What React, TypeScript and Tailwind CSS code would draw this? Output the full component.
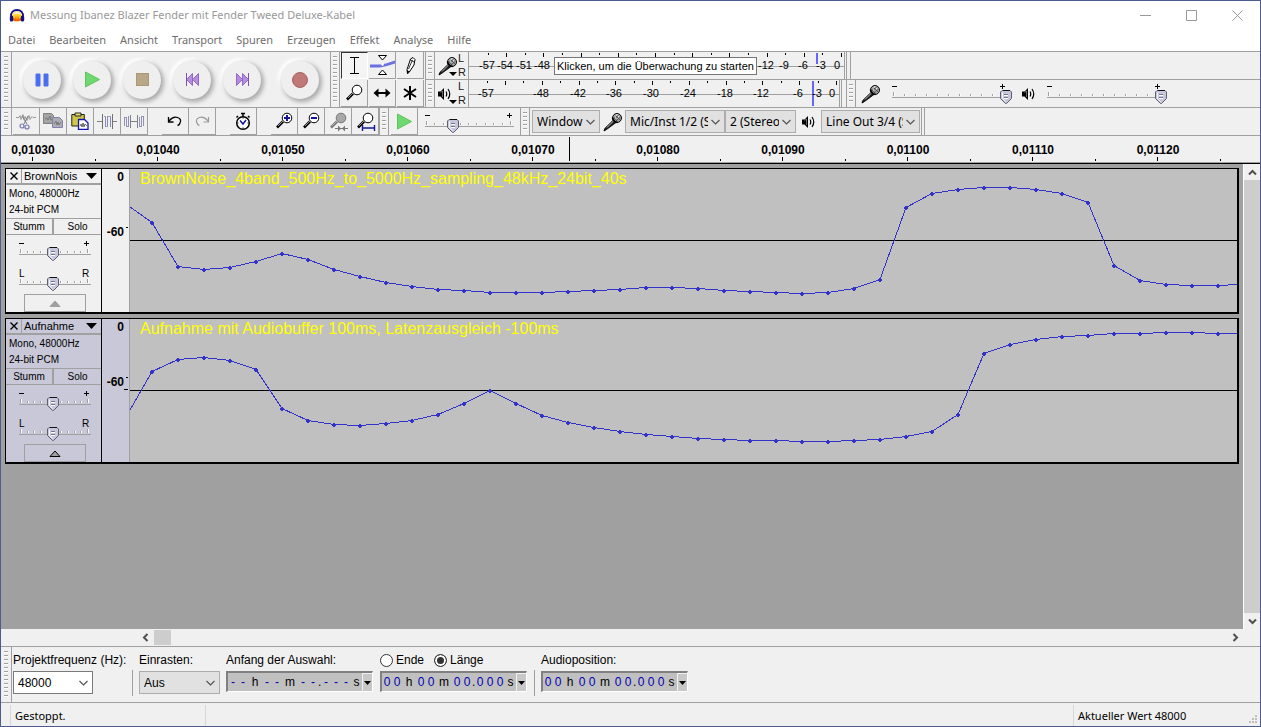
import { useState, type ReactNode } from 'react';
import clsx from 'clsx';

type Track = {
  name: string;
  label: string;
  selected: boolean;
  start: number;
  end: number;
  samples: number[];
};

const menus = ['Datei', 'Bearbeiten', 'Ansicht', 'Transport', 'Spuren', 'Erzeugen', 'Effekt', 'Analyse', 'Hilfe'];

const tracks: Track[] = [
  {
    name: 'BrownNois',
    label: 'BrownNoise_4band_500Hz_to_5000Hz_sampling_48kHz_24bit_40s',
    selected: false,
    start: 38,
    end: 115,
    samples: [
      53, 97, 100, 98, 92, 84, 90, 100, 107, 113, 117, 120, 121, 123, 123, 123, 122, 121, 120, 118, 118, 119, 121, 122,
      123, 124, 123, 119, 110, 38, 24, 20, 18, 18, 20, 24, 33, 96, 111, 115, 116, 116,
    ],
  },
  {
    name: 'Aufnahme',
    label: 'Aufnahme mit Audiobuffer 100ms, Latenzausgleich -100ms',
    selected: true,
    start: 91,
    end: 14,
    samples: [
      52, 40, 38, 41, 50, 89, 101, 105, 106, 104, 101, 95, 84, 71, 84, 96, 103, 108, 112, 115, 117, 119, 120, 121, 121,
      122, 122, 121, 120, 117, 112, 95, 34, 25, 20, 17, 16, 14, 14, 13, 13, 14,
    ],
  },
];

const timeLabels = [
  '0,01030', '0,01040', '0,01050', '0,01060', '0,01070', '0,01080', '0,01090', '0,01100', '0,01110', '0,01120',
];

/* ---------- small building blocks ---------- */

function Grip({ flush = false }: { flush?: boolean }) {
  return (
    <div className={clsx('flex shrink-0 justify-center border-r border-[#a0a0a0] py-1', flush ? 'w-[11px]' : 'w-[10px] border-l')}>
      <div className="w-1 bg-[repeating-linear-gradient(to_bottom,#a0a0a0_0_1px,#ffffff_1px_2px,#f0f0f0_2px_4px)]" />
    </div>
  );
}

function ToolButton({ label, active, children }: { label: string; active?: boolean; children: ReactNode }) {
  return (
    <button
      aria-label={label}
      className={clsx(
        'flex h-[27px] w-[27px] shrink-0 items-center justify-center border-r border-b',
        active ? 'border-t border-l border-t-[#333] border-l-[#333] border-r-white border-b-white bg-[#f4f4f4]' : 'border-[#a0a0a0]',
      )}
    >
      {children}
    </button>
  );
}

function RoundButton({ label, children }: { label: string; children: ReactNode }) {
  return (
    <button
      aria-label={label}
      className="flex h-[38px] w-[38px] shrink-0 items-center justify-center rounded-full bg-[#efefef] shadow-[2px_2px_4px_1px_#acacac,-2px_-2px_3px_1px_#ffffff]"
    >
      {children}
    </button>
  );
}

function Slider({
  label,
  width,
  value,
  left = '-',
  right = '+',
}: {
  label: string;
  width: number;
  value: number;
  left?: string;
  right?: string;
}) {
  const [pos, setPos] = useState(value);
  const ticks = Array.from({ length: 11 }, (_, i) => Math.round(1 + (i * (width - 5)) / 10));
  const x = Math.round(((width - 1) * pos) / 100);
  return (
    <div className="relative h-[22px] shrink-0" style={{ width }}>
      <svg width={width} height="22" className="block overflow-visible" shapeRendering="crispEdges">
        {left === '-' ? (
          <path d="M0 3.5h5" stroke="#000" />
        ) : (
          <text x="0" y="7" fontSize="10" className="font-['Liberation_Sans',sans-serif]">{left}</text>
        )}
        {right === '+' ? (
          <path d={`M${width - 7} 3.5h5M${width - 4.5} 1v5`} stroke="#000" />
        ) : (
          <text x={width - 9} y="7" fontSize="10" className="font-['Liberation_Sans',sans-serif]">{right}</text>
        )}
        {ticks.map((t, i) => {
          const edge = i === 0 || i === 10;
          return (
            <g key={t}>
              <rect x={t} y={edge ? 9 : 11} width="1" height={edge ? 4 : 2} fill="#a0a0a0" />
              <rect x={t + 1} y={edge ? 9 : 11} width="1" height={edge ? 4 : 2} fill="#fff" />
            </g>
          );
        })}
        <rect x="0" y="14" width={width} height="1" fill="#a0a0a0" />
        <g transform={`translate(${x - 6} 7)`}>
          <path d="M2 .5h8l1.500 1.500v6.500l-5 5h-1l-5-5V2z" fill="#c6c6dc" stroke="#5f5f6b" shapeRendering="auto" />
          <path d="M3 .5h6.500" stroke="#111" />
          <path d="M2.500 2.500v6l3 3" stroke="#f4f4ff" fill="none" shapeRendering="auto" />
          <path d="M4 4.500h4M4 7.500h4" stroke="#77778c" />
          <path d="M4 5.500h4M4 8.500h4" stroke="#fff" />
        </g>
      </svg>
      <input
        type="range"
        aria-label={label}
        value={pos}
        onChange={(e) => setPos(Number(e.target.value))}
        className="absolute inset-0 m-0 h-full w-full cursor-pointer opacity-0"
      />
    </div>
  );
}

function Dropdown({
  label,
  value,
  id,
  className,
}: {
  label?: string;
  value: string;
  id?: string;
  className: string;
}) {
  return (
    <div className={clsx('relative flex shrink-0 border', className)}>
      <select
        id={id}
        aria-label={label}
        className="h-full w-full appearance-none overflow-hidden bg-transparent pr-[16px] pl-[4px] text-black outline-none"
      >
        <option>{value}</option>
      </select>
      <svg width="9" height="6" viewBox="0 0 9 6" className="pointer-events-none absolute top-1/2 right-[4px] -mt-[3px]">
        <path d="M.5 1l4 4 4-4" fill="none" stroke="#505050" strokeWidth="1.100" />
      </svg>
    </div>
  );
}

/* ---------- icons ---------- */

function Logo() {
  return (
    <svg width="16" height="16" viewBox="0 0 16 16">
      <path d="M3.500 7q1-3.500 4.500-3.500T12.500 7v5.500q-4.500 2-9 0z" fill="#ffcf20" />
      <path d="M4 6.500Q5 4 8 4t4 2.500q-4-1-8 0z" fill="#fff8d8" />
      <path d="M4 10.500l1-1 1 2 1-4 1 5 1-5 1 4 1-2 1 1v2q-4 1.500-8 0z" fill="#f86000" />
      <path d="M2 9C1.500 4 4.500 2 8 2s6.500 2 6 7" fill="none" stroke="#10108c" strokeWidth="1.800" />
      <rect x=".8" y="7.500" width="3.400" height="6" rx="1.500" fill="#10108c" />
      <rect x="11.800" y="7.500" width="3.400" height="6" rx="1.500" fill="#10108c" />
    </svg>
  );
}

function MicIcon() {
  return (
    <svg width="20" height="20" viewBox="0 0 20 20">
      <path d="M10.500 8l2.500 2.500L3.500 17.500 1 19l.8-2.500z" fill="#222" stroke="#000" strokeWidth=".9" />
      <path d="M10.500 9L4 15.500" stroke="#d0d0d0" strokeWidth=".9" />
      <circle cx="14" cy="6" r="4.500" fill="#a8a8a8" stroke="#000" />
      <path d="M10.500 5l4 4.500M12 3l5 5M11 7.500l5-5M13 9l4.500-4" stroke="#333" strokeWidth=".7" />
      <path d="M12.500 3.500l2-1M15 4.500l1 .5M12 6h1" stroke="#fff" strokeWidth="1" />
      <path d="M9.500 5.500q1 4.500 5 5" stroke="#000" strokeWidth="1.600" fill="none" />
    </svg>
  );
}

function SpeakerIcon() {
  return (
    <svg width="14" height="14" viewBox="0 0 14 14">
      <path d="M0 4.500h2.500L6 1v12L2.500 9.500H0z" fill="#000" />
      <path d="M2.500 5.500L4.500 4v6" stroke="#888" strokeWidth=".8" fill="none" />
      <path d="M8 4.500q1.500 2.500 0 5M10 2q3.500 5 0 10" fill="none" stroke="#000" strokeWidth="1.200" />
    </svg>
  );
}

function Lens({ sign, gray, children }: { sign?: 'plus' | 'minus'; gray?: boolean; children?: ReactNode }) {
  const ink = gray ? '#777' : '#000';
  return (
    <svg width="21" height="21" viewBox="0 0 21 21">
      <path d="M9 10.500L3 16.500" stroke={ink} strokeWidth="2.600" />
      <path d="M9 10L4 15" stroke="#bbb" strokeWidth=".8" />
      <circle cx="13" cy="7" r="4.800" fill={gray ? '#a8a8a8' : '#fff'} stroke={ink} />
      {sign && <path d="M10 7h6" stroke="#1414a0" strokeWidth="2" />}
      {sign === 'plus' && <path d="M13 4v6" stroke="#1414a0" strokeWidth="2" />}
      {children}
    </svg>
  );
}

function PlayGlyph() {
  return (
    <svg width="17" height="17" viewBox="0 0 17 17">
      <path d="M1.500 1v15l14-7.500z" fill="#70d870" stroke="#5cc45c" />
    </svg>
  );
}

function SkipGlyph({ back }: { back?: boolean }) {
  return (
    <svg width="15" height="15" viewBox="0 0 15 15" className={back ? '-scale-x-100' : ''}>
      <path d="M1.500 1.500v12l6-6zM7.500 1.500v12l6-6z" fill="#b48ce0" stroke="#9468c4" />
      <path d="M13.500 1v13" stroke="#8050b0" />
    </svg>
  );
}

/* ---------- toolbars ---------- */

function TransportToolbar() {
  return (
    <div className="flex shrink-0">
      <Grip flush />
      <div className="flex items-center gap-[12px] pr-[11px] pl-[11px]">
        <RoundButton label="Pause">
          <svg width="14" height="14" viewBox="0 0 14 14">
            <path d="M1 1h4v12H1zM9 1h4v12H9z" fill="#4a6ef0" stroke="#4a6ef0" />
          </svg>
        </RoundButton>
        <RoundButton label="Wiedergabe"><PlayGlyph /></RoundButton>
        <RoundButton label="Stopp">
          <span className="h-[13px] w-[13px] border border-[#a89878] bg-[#b8a888]" />
        </RoundButton>
        <RoundButton label="Zum Anfang"><SkipGlyph back /></RoundButton>
        <RoundButton label="Zum Ende"><SkipGlyph /></RoundButton>
        <div className="pl-2">
          <RoundButton label="Aufnahme">
            <span className="h-4 w-4 rounded-full border border-[#a86464] bg-[#c07878]" />
          </RoundButton>
        </div>
      </div>
    </div>
  );
}

function ToolsToolbar() {
  return (
    <div className="flex shrink-0">
      <Grip />
      <div className="grid grid-cols-3 gap-px px-px">
        <ToolButton label="Auswahlwerkzeug" active>
          <svg width="17" height="19" viewBox="0 0 17 19" shapeRendering="crispEdges">
            <path d="M4 1.500h9M4 17.500h9M8.500 1v17" stroke="#000" />
          </svg>
        </ToolButton>
        <ToolButton label="Hüllkurvenwerkzeug">
          <svg width="25" height="22" viewBox="0 0 25 22" className="shrink-0">
            <path d="M0 10.500h10l6-1 9-3v3l-8 2.500-7 1.500H0z" fill="#6a70e0" />
            <path d="M8.500 1.500h8l-4 4.500zM8.500 20.500h8l-4-4.500z" fill="#fff" stroke="#000" />
            <circle cx="12.500" cy="10.500" r="1.300" fill="#fff" />
          </svg>
        </ToolButton>
        <ToolButton label="Zeichenwerkzeug">
          <svg width="17" height="19" viewBox="0 0 17 19">
            <path d="M8.500 3l2.500-1.500 2 2-1 5.500-5 7.500-1.500 1-.5-4z" fill="#fff" stroke="#000" />
            <path d="M10.500 4L6.500 13M8 3.500l4 2.500" stroke="#000" strokeWidth=".8" />
            <path d="M5 14l2.500 1.500L5 18z" fill="#000" />
          </svg>
        </ToolButton>
        <ToolButton label="Zoomwerkzeug"><Lens /></ToolButton>
        <ToolButton label="Verschiebewerkzeug">
          <svg width="18" height="10" viewBox="0 0 18 10">
            <path d="M4 5h10" stroke="#000" strokeWidth="2" />
            <path d="M5.500.5v9L.5 5zM12.500.5v9l5-4.500z" fill="#000" />
          </svg>
        </ToolButton>
        <ToolButton label="Multifunktionswerkzeug">
          <svg width="16" height="16" viewBox="0 0 16 16">
            <path d="M8 1v14M2 4l12 8M14 4L2 12" stroke="#000" strokeWidth="2" />
          </svg>
        </ToolButton>
      </div>
    </div>
  );
}

function MeterScale({ zero, step, labels, peak, full }: { zero: number; step: number; labels: number[]; peak: number; full?: boolean }) {
  const at = (db: number) => Math.round(zero + db * step);
  return (
    <svg width={zero + 3} height="26" className="block shrink-0" shapeRendering="crispEdges">
      <path d={`M0 14.500h${zero + 3}`} stroke="#a0a0a0" />
      {Array.from({ length: 20 }, (_, i) => -3 * i).map((db) => (
        <rect key={db} x={at(db)} y="1" width="1" height={db % 6 === 0 ? 4 : 2} fill="#000" />
      ))}
      <rect x={peak} y="1" width="2" height={full ? 25 : 11} fill="#6464ff" />
      {labels.map((db) => (
        <text
          key={db}
          x={at(db) - (db === 0 ? 4 : 1)}
          y="17"
          textAnchor="middle"
          fontSize="11"
          className="font-['Liberation_Sans',sans-serif]"
        >
          {db}
        </text>
      ))}
    </svg>
  );
}

function MeterHead({ icon }: { icon: ReactNode }) {
  return (
    <>
      <button aria-label="Pegelmenü" className="relative ml-[3px] flex w-[20px] items-center">
        {icon}
        <svg width="8" height="4" viewBox="0 0 8 4" className="absolute right-px bottom-[3px]">
          <path d="M0 0h8L4 4z" fill="#000" />
        </svg>
      </button>
      <div className="flex w-[10px] flex-col justify-between pb-px text-[11px] leading-[12px] text-[#222]">
        <span>L</span>
        <span>R</span>
      </div>
    </>
  );
}

function MeterToolbars() {
  return (
    <div className="flex min-w-0 flex-1 flex-col">
      <div className="relative flex h-[28px] border-b border-[#a0a0a0]">
        <Grip />
        <MeterHead icon={<MicIcon />} />
        <div className="flex border-l border-[#a0a0a0]">
          <MeterScale zero={372} step={6.2} labels={[-57, -54, -51, -48, -12, -9, -6, -3, 0]} peak={347} />
          <div className="w-[3px] border-x border-[#a0a0a0]" />
          <div className="w-[4px] border-r border-[#a0a0a0]" />
        </div>
        <div
          role="tooltip"
          className="absolute top-[5px] left-[129px] h-[18px] border border-[#767676] bg-white px-[2px] text-[11px] leading-[16px] whitespace-nowrap text-black"
        >
          Klicken, um die Überwachung zu starten
        </div>
      </div>
      <div className="flex h-[27px]">
        <Grip />
        <MeterHead icon={<SpeakerIcon />} />
        <div className="flex border-l border-[#a0a0a0]">
          <MeterScale zero={367} step={6.13} labels={[-57, -48, -42, -36, -30, -24, -18, -12, -6, -3, 0]} peak={343} full />
          <div className="w-[3px] border-x border-[#a0a0a0]" />
          <div className="w-[4px]" />
        </div>
        <Grip />
        <div className="flex items-center pl-[5px]">
          <MicIcon />
          <div className="mr-[15px] ml-[11px]">
            <Slider label="Aufnahmelautstärke" width={115} value={100} />
          </div>
          <SpeakerIcon />
          <div className="ml-[11px]">
            <Slider label="Wiedergabelautstärke" width={115} value={100} />
          </div>
        </div>
      </div>
    </div>
  );
}

function EditToolbar() {
  return (
    <div className="flex h-[29px] border-y border-[#a0a0a0]">
      <Grip flush />
      <div className="flex pl-px">
        <ToolButton label="Ausschneiden">
          <svg width="20" height="19" viewBox="0 0 20 19" fill="none">
            <path d="M0 5.500h3l1-2 1 4 2-5 1 5 1-3 2 4 2-5 1 4 2-3 1 1h3" stroke="#999" />
            <path d="M6 4l5 8M12 4L8 12" stroke="#777" />
            <circle cx="6" cy="14" r="2" stroke="#7878b4" strokeWidth="1.200" />
            <circle cx="11" cy="15" r="2" stroke="#7878b4" strokeWidth="1.200" />
          </svg>
        </ToolButton>
        <ToolButton label="Kopieren">
          <svg width="20" height="18" viewBox="0 0 20 18">
            <path d="M.5 1.500h8l2 2v8H.5z" fill="#a4a4a4" stroke="#808080" />
            <path d="M2 7l2-1 1 2 2-4 1 4 2-1" stroke="#777" fill="none" />
            <path d="M9.500 5.500h7l3 3v7h-10z" fill="#acacb4" stroke="#8080ac" />
            <path d="M11 12l2-3 1 4 1-3 1 3 2-3" stroke="#777" fill="none" />
          </svg>
        </ToolButton>
        <ToolButton label="Einfügen">
          <svg width="18" height="18" viewBox="0 0 18 18">
            <path d="M.8 2.500h12.500v11.500H.8z" fill="#d0c848" stroke="#222" />
            <path d="M4 1h6v3H4z" fill="#e8e080" stroke="#222" />
            <path d="M7.500 7.500h6l3.500 3.500v6.300H7.500z" fill="#fff" stroke="#1414b4" strokeWidth="1.300" />
            <path d="M9 14l1-2 1 3 1-4 1 4 1-3 2 2" stroke="#444" fill="none" strokeWidth=".8" />
          </svg>
        </ToolButton>
        <ToolButton label="Trimmen">
          <svg width="20" height="17" viewBox="0 0 20 17" fill="none" shapeRendering="crispEdges">
            <path d="M0 8.500h5M15 8.500h5" stroke="#808080" />
            <path d="M5.500 1v15M15.500 1v15" stroke="#707070" />
            <path d="M8.500 3v11M10.500 3v11M13.500 3v11" stroke="#8888b4" />
            <path d="M6.500 3h2M10.500 3.500h3M8.500 13.500h2" stroke="#a0a0b8" />
          </svg>
        </ToolButton>
        <ToolButton label="Stille">
          <svg width="20" height="17" viewBox="0 0 20 17" fill="none" shapeRendering="crispEdges">
            <path d="M6 8.500h8" stroke="#808080" />
            <path d="M6.500 2v13M13.500 2v13" stroke="#808080" />
            <path d="M.5 13V4h2v9h2V3M15.500 4v9h2V3h2v10" stroke="#9090b8" />
          </svg>
        </ToolButton>
        <div className="w-[14px]" />
        <ToolButton label="Rückgängig">
          <svg width="16" height="12" viewBox="0 0 16 12" fill="none">
            <path d="M2 6Q6 1 10.500 2.500T13 8q-.5 2-2.500 2.500" stroke="#000" strokeWidth="1.300" />
            <path d="M1.500 2v5h5" stroke="#000" strokeWidth="1.300" />
          </svg>
        </ToolButton>
        <ToolButton label="Wiederherstellen">
          <svg width="16" height="12" viewBox="0 0 16 12" fill="none" className="-scale-x-100">
            <path d="M2 6Q6 1 10.500 2.500T13 8q-.5 2-2.500 2.500M1.500 2v5h5" stroke="#999" strokeWidth="1.200" />
          </svg>
        </ToolButton>
        <div className="w-[14px]" />
        <ToolButton label="Synchronisation">
          <svg width="16" height="19" viewBox="0 0 16 19">
            <path d="M6 1.500h4M8 1v4M13 4l1.500 1.500M3 4L1.500 5.500" stroke="#000" strokeWidth="1.500" />
            <circle cx="8" cy="11" r="6.300" fill="#fff" stroke="#000" strokeWidth="1.500" />
            <path d="M5 8.500l3 3.500 3-4" fill="none" stroke="#1414a0" strokeWidth="1.500" />
            <path d="M8 5.500v1M8 15.500v1M2.500 11h1M12.500 11h1" stroke="#000" />
          </svg>
        </ToolButton>
        <div className="w-[14px]" />
        <ToolButton label="Vergrößern"><Lens sign="plus" /></ToolButton>
        <ToolButton label="Verkleinern"><Lens sign="minus" /></ToolButton>
        <ToolButton label="Auswahl einpassen">
          <Lens gray>
            <path d="M7 17.500h13" stroke="#777" />
            <path d="M10 14.500l3 3-3 3zM17 14.500l-3 3 3 3z" fill="#777" />
          </Lens>
        </ToolButton>
        <ToolButton label="Projekt einpassen">
          <Lens>
            <path d="M7.500 14v6M19.500 14v6M7 17h12" stroke="#1414a0" strokeWidth="1.400" fill="none" />
          </Lens>
        </ToolButton>
      </div>
      <Grip />
      <div className="flex pl-[2px]">
        <ToolButton label="Wiedergabe mit Geschwindigkeit"><PlayGlyph /></ToolButton>
        <div className="mr-[6px] ml-[7px] pt-[4px]">
          <Slider label="Wiedergabegeschwindigkeit" width={89} value={32} />
        </div>
      </div>
      <Grip />
      <div className="flex items-center pl-[2px] font-['Noto_Sans','Open_Sans',sans-serif] text-[12px]">
        <Dropdown label="Audio-Host" value="Window" className="h-[23px] w-[68px] border-[#adadad] bg-[#e1e1e1]" />
        <div className="mr-[2px] ml-[3px]"><MicIcon /></div>
        <Dropdown label="Aufnahmegerät" value="Mic/Inst 1/2 (S" className="h-[23px] w-[100px] border-[#adadad] bg-[#e1e1e1]" />
        <Dropdown label="Aufnahmekanäle" value="2 (Stereo)" className="h-[23px] w-[71px] border-[#adadad] bg-[#e1e1e1]" />
        <div className="mr-[5px] ml-[6px]"><SpeakerIcon /></div>
        <Dropdown label="Wiedergabegerät" value="Line Out 3/4 (S" className="h-[23px] w-[99px] border-[#adadad] bg-[#e1e1e1]" />
      </div>
      <div className="ml-px w-[4px] border-x border-[#a0a0a0]" />
    </div>
  );
}

/* ---------- time line and tracks ---------- */

function TimeRuler() {
  return (
    <div className="h-[27px] border-b border-[#a0a0a0] bg-[#f0f0f0]">
      <svg width="100%" height="26" className="block" shapeRendering="crispEdges">
        {timeLabels.map((t, i) => (
          <g key={t}>
            <text
              x={32 + i * 125}
              y="18"
              textAnchor="middle"
              fontSize="12"
              fontWeight="bold"
              className="font-['Liberation_Sans',sans-serif]"
            >
              {t}
            </text>
            <rect x={31 + i * 125} y="21" width="1" height="4" />
            <rect x={94 + i * 125} y="23" width="1" height="2" />
          </g>
        ))}
        <rect x="568" y="1" width="1" height="24" />
      </svg>
    </div>
  );
}

function Waveform({ track }: { track: Track }) {
  const pts = track.samples.map((y, i) => [22 + i * 26, y + 0.5]);
  const line = [[0, track.start], ...pts, [1108, track.end + 0.5]].map((p) => p.join(',')).join(' ');
  return (
    <div className="relative min-w-0 flex-1 bg-[#c0c0c0]">
      <svg width="100%" height="143" className="block" shapeRendering="crispEdges">
        <rect x="0" y="71" width="100%" height="1" />
        <polyline points={line} fill="none" stroke="#3232c8" />
        {pts.map(([x, y]) => (
          <path key={x} d={`M${x - 2} ${y - 0.5}h1v-1h2v1h1v2h-1v1h-2v-1h-1z`} fill="#3232c8" />
        ))}
      </svg>
      <span className="absolute top-0 left-[10px] text-[16px] leading-[20px] whitespace-nowrap text-[#ffff00]">
        {track.label}
      </span>
    </div>
  );
}

function TrackRow({ track }: { track: Track }) {
  const bg = track.selected ? 'bg-[#c8c8d8]' : 'bg-[#f0f0f0]';
  return (
    <section className="flex h-[146px] border border-r-2 border-b-2 border-black">
      <div className={clsx('flex w-[96px] shrink-0 flex-col border-r border-black text-[11px]', bg)}>
        <div className="flex h-[16px] border-b-2 border-[#a0a0a0]">
          <button aria-label="Spur schließen" className="flex w-[16px] items-center justify-center border-r border-[#a0a0a0]">
            <svg width="8" height="8" viewBox="0 0 8 8">
              <path d="M.5.5l7 7M7.500.5l-7 7" stroke="#000" strokeWidth="1.400" />
            </svg>
          </button>
          <button className="flex flex-1 items-center justify-between pr-[4px] pl-[2px] leading-[14px]">
            {track.name}
            <svg width="11" height="6" viewBox="0 0 11 6">
              <path d="M0 0h11L5.500 6z" fill="#000" />
            </svg>
          </button>
        </div>
        <div className="h-[33px] pt-px pl-[3px] text-[10px] leading-[16px]">
          <p>Mono, 48000Hz</p>
          <p>24-bit PCM</p>
        </div>
        <div className="flex h-[17px] border-y border-[#a0a0a0] text-[10px] leading-[15px]">
          <button className="w-[48px] border-r-2 border-[#a0a0a0]">Stumm</button>
          <button className="flex-1">Solo</button>
        </div>
        <div className="flex flex-col items-start gap-[8px] pt-[5px] pl-[13px]">
          <Slider label="Verstärkung" width={72} value={48} />
          <Slider label="Balance" width={72} value={48} left="L" right="R" />
        </div>
        <button
          aria-label="Spur einklappen"
          className="mt-auto ml-[18px] flex h-[18px] w-[62px] items-center justify-center border border-[#a0a0a0]"
        >
          <svg width="12" height="7" viewBox="0 0 12 7">
            <path d="M1 6.500h10L6 1z" fill="#a0a0a0" stroke={track.selected ? '#000' : '#a0a0a0'} />
          </svg>
        </button>
      </div>
      <div className={clsx('flex w-[28px] shrink-0 flex-col items-end border-r border-[#a0a0a0] pt-px pr-[5px] text-[12px] leading-[15px] font-bold', bg)}>
        <span>0</span>
        <span className="relative mt-[40px]">
          -60
          <span className="absolute top-[2px] -right-[4px] h-px w-[2px] bg-black" />
          {track.selected && <span className="absolute top-[14px] -right-[4px] h-px w-[4px] bg-black" />}
        </span>
      </div>
      <Waveform track={track} />
    </section>
  );
}

function ScrollButton({ label, d }: { label: string; d: string }) {
  return (
    <button aria-label={label} className="flex h-[16px] w-[16px] shrink-0 items-center justify-center">
      <svg width="9" height="9" viewBox="0 0 9 9">
        <path d={d} fill="none" stroke="#505050" strokeWidth="2" />
      </svg>
    </button>
  );
}

/* ---------- bottom bars ---------- */

function TimeField({ label, empty }: { label: string; empty?: boolean }) {
  const parts = ['0', '0', 'h', '0', '0', 'm', '0', '0', '.', '0', '0', '0', 's'];
  const unitWidth: Record<string, string> = { h: 'w-[14px]', m: 'w-[16px]', '.': 'w-[3px]', s: 'w-[11px]' };
  return (
    <div
      role="group"
      aria-label={label}
      className="flex h-[21px] w-[147px] items-center border-t-2 border-r border-b border-l-2 border-t-[#808080] border-l-[#808080] border-r-white border-b-white bg-[#c0c0c0] text-[12px] leading-[17px]"
    >
      {parts.map((p, i) =>
        p === '0' ? (
          <input
            key={i}
            aria-label={`${label} Stelle ${i + 1}`}
            defaultValue={empty ? '-' : '0'}
            maxLength={1}
            className="w-[10px] bg-transparent p-0 text-center text-[#0000b4] outline-none"
          />
        ) : (
          <span key={i} className={clsx('text-center', unitWidth[p])}>{p}</span>
        ),
      )}
      <button
        aria-label={`${label} Format`}
        className="flex h-full w-[10px] items-center justify-center border-t border-l border-[#f0f0f0] bg-[#c8c8c8]"
      >
        <svg width="7" height="4" viewBox="0 0 7 4">
          <path d="M0 0h7L3.500 4z" fill="#000" />
        </svg>
      </button>
    </div>
  );
}

function SelectionToolbar() {
  const [mode, setMode] = useState('length');
  const radio =
    'h-[13px] w-[13px] appearance-none rounded-full border border-[#333] bg-white checked:shadow-[inset_0_0_0_2px_#fff] checked:bg-[#333]';
  return (
    <div className="flex h-[57px] border-y border-[#a0a0a0] text-[12px]">
      <Grip flush />
      <div className="flex pt-[3px] leading-[20px]">
        <div className="mr-[6px] w-[114px] pl-px">
          <label htmlFor="rate" className="block whitespace-nowrap">Projektfrequenz (Hz):</label>
          <Dropdown id="rate" value="48000" className="mt-px h-[23px] w-[80px] border-[#7a7a7a] bg-white" />
        </div>
        <div className="mt-[20px] mr-[6px] h-[26px] w-px bg-[#a0a0a0]" />
        <div className="mr-[6px] w-[81px]">
          <label htmlFor="snap" className="block">Einrasten:</label>
          <Dropdown id="snap" value="Aus" className="mt-px h-[23px] w-[81px] border-[#adadad] bg-[#e1e1e1]" />
        </div>
        <div className="mr-[7px]">
          <p>Anfang der Auswahl:</p>
          <div className="mt-px"><TimeField label="Anfang der Auswahl" empty /></div>
        </div>
        <div className="mr-[7px]">
          <div className="flex h-[20px] items-center">
            <label className="mr-[10px] flex items-center gap-[3px]">
              <input type="radio" name="mode" checked={mode === 'end'} onChange={() => setMode('end')} className={radio} />
              Ende
            </label>
            <label className="flex items-center gap-[3px]">
              <input type="radio" name="mode" checked={mode === 'length'} onChange={() => setMode('length')} className={radio} />
              Länge
            </label>
          </div>
          <div className="mt-px"><TimeField label="Länge" /></div>
        </div>
        <div className="mt-[20px] mr-[6px] h-[26px] w-px bg-[#a0a0a0]" />
        <div>
          <p>Audioposition:</p>
          <div className="mt-px"><TimeField label="Audioposition" /></div>
        </div>
      </div>
    </div>
  );
}

function StatusBar() {
  return (
    <footer className="flex h-[23px] items-stretch pt-[2px] font-['Noto_Sans','Open_Sans',sans-serif] text-[11px] leading-[21px]">
      <div className="ml-[9px] w-[196px] border-x border-[#d7d7d7] pl-[4px]">Gestoppt.</div>
      <div className="flex-1" />
      <div className="w-[187px] border-l border-[#d7d7d7] pl-[4px]">Aktueller Wert 48000</div>
      <svg width="10" height="10" viewBox="0 0 10 10" className="absolute right-[3px] bottom-[2px]">
        <path d="M8 2h2M5 5h2M8 5h2M2 8h2M5 8h2M8 8h2" stroke="#bfbfbf" strokeWidth="2" />
      </svg>
    </footer>
  );
}

export default function App() {
  return (
    <div className="relative flex h-screen flex-col overflow-hidden border border-[#4c5c8c] bg-[#f0f0f0] font-['Liberation_Sans',Arial,sans-serif] text-black">
      <header className="bg-white font-['Noto_Sans','Open_Sans',sans-serif] text-[11px]">
        <div className="flex h-[29px] items-center pl-[8px] text-[#999]">
          <Logo />
          <h1 className="ml-[5px] flex-1">Messung Ibanez Blazer Fender mit Fender Tweed Deluxe-Kabel</h1>
          <div className="flex text-[#999]">
            {['M0 5.500h11', 'M.5.5h10v10H.5z', 'M.5.5l10 10M10.500.5l-10 10'].map((d, i) => (
              <button key={d} aria-label={['Minimieren', 'Maximieren', 'Schließen'][i]} className="flex h-[28px] w-[46px] items-center justify-center">
                <svg width="11" height="11" viewBox="0 0 11 11">
                  <path d={d} fill="none" stroke="currentColor" />
                </svg>
              </button>
            ))}
          </div>
        </div>
        <nav className="flex h-[21px] items-center gap-[14px] pl-[7px] text-[#6d6d6d]">
          {menus.map((m) => (
            <button key={m}>{m}</button>
          ))}
        </nav>
      </header>

      <div className="flex h-[56px] border-t border-[#a0a0a0]">
        <TransportToolbar />
        <ToolsToolbar />
        <MeterToolbars />
      </div>
      <EditToolbar />
      <TimeRuler />

      <div className="flex min-h-0 flex-1 border-t border-black">
        <main className="flex min-w-0 flex-1 flex-col gap-[4px] bg-[#a0a0a0] p-[4px]">
          {tracks.map((t) => (
            <TrackRow key={t.name} track={t} />
          ))}
        </main>
        <div className="flex w-[17px] flex-col border-l border-white">
          <ScrollButton label="Nach oben" d="M1 6.500l3.500-3.500L8 6.500" />
          <div className="flex-1 bg-[#cdcdcd]" />
          <ScrollButton label="Nach unten" d="M1 2.500L4.500 6 8 2.500" />
        </div>
      </div>
      <div className="flex h-[17px] shrink-0 items-center pr-[17px] pl-[136px]">
        <ScrollButton label="Nach links" d="M6.500 1L3 4.500 6.500 8" />
        <div className="h-[15px] flex-1">
          <div className="ml-px h-full w-[17px] bg-[#cdcdcd]" />
        </div>
        <ScrollButton label="Nach rechts" d="M2.500 1L6 4.500 2.500 8" />
      </div>

      <SelectionToolbar />
      <StatusBar />
    </div>
  );
}
